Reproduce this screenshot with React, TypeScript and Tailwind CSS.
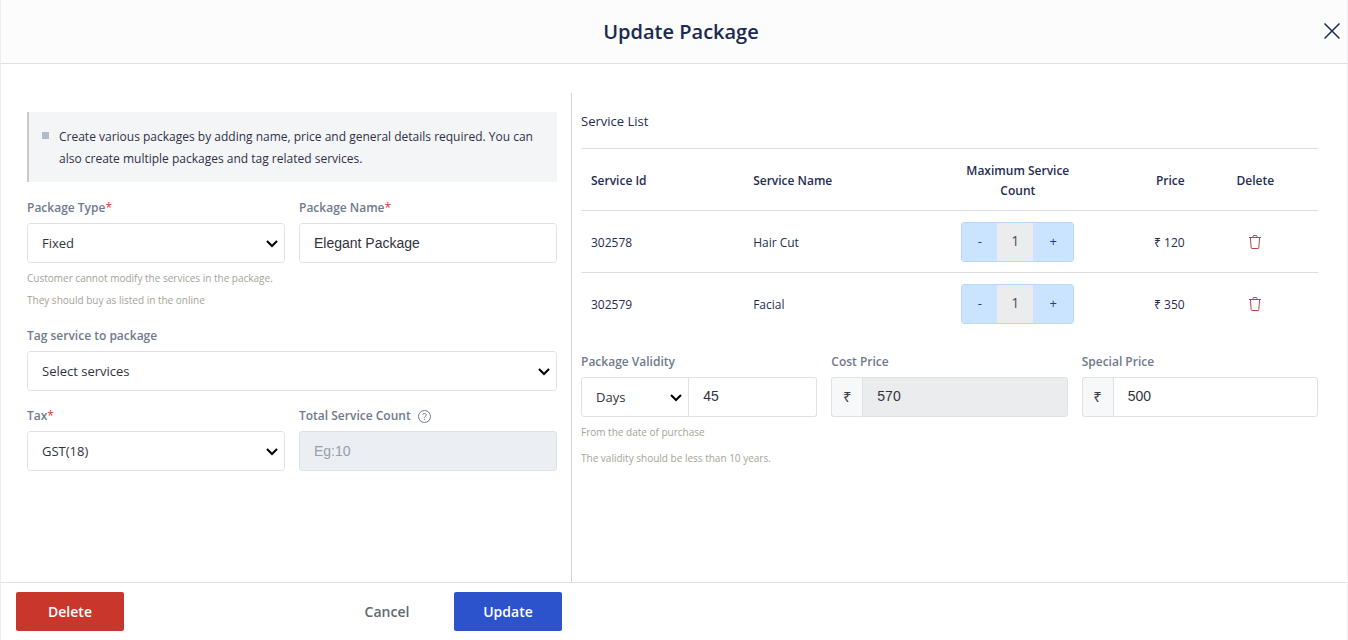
import { useState } from "react"
import type { ReactNode } from "react"

type Service = {
  id: number
  name: string
  count: number
  price: number
}

const initialServices: Service[] = [
  { id: 302578, name: "Hair Cut", count: 1, price: 120 },
  { id: 302579, name: "Facial", count: 1, price: 350 },
]

const controlClass =
  "block h-10 w-full min-w-0 rounded-[3px] border border-[#dee2e6] text-[#33333d] focus:outline-none focus:border-[#2c52cc]"

const inputClass = `${controlClass} px-[14px] font-['Liberation_Sans',sans-serif] text-[14px]`

const hintClass = "mt-1 text-[10px] leading-[22px] text-[#a5a397]"

function FieldLabel({ htmlFor, required, children }: { htmlFor: string; required?: boolean; children: ReactNode }) {
  return (
    <label htmlFor={htmlFor} className="mb-[3px] flex h-6 items-center text-[12px] font-semibold text-[#707a8c]">
      {children}
      {required && <span className="font-normal text-[#d0392c]">*</span>}
    </label>
  )
}

type SelectBoxProps = {
  id: string
  options: string[]
  joined?: boolean
  label?: string
}

function SelectBox({ id, options, joined, label }: SelectBoxProps) {
  return (
    <div className="relative">
      <select
        id={id}
        aria-label={label}
        className={`${controlClass} appearance-none bg-white pl-[14px] pr-8 pt-[2px] text-[13px] ${joined ? "rounded-r-none" : ""}`}
      >
        {options.map((option) => (
          <option key={option}>{option}</option>
        ))}
      </select>
      <svg
        className="pointer-events-none absolute right-[7px] top-4 h-[9px] w-3"
        viewBox="0 0 12 9"
        fill="none"
        stroke="#000"
        strokeWidth={2}
      >
        <path d="M1 2l5 5 5-5" />
      </svg>
    </div>
  )
}

function TrashIcon() {
  return (
    <svg className="h-[14px] w-3" viewBox="0 0 12 14" fill="none" stroke="#b8483c" strokeWidth={1}>
      <path d="M0 2.5h12M4 2V1.2Q4 .5 4.8 .5h2.4Q8 .5 8 1.2V2M1.4 2.5l.8 10.3q.1.7.8.7h6q.7 0 .8-.7l.8-10.3" />
    </svg>
  )
}

function HelpIcon() {
  return (
    <svg className="ml-[7px] h-[13px] w-[13px]" viewBox="0 0 13 13" fill="none" stroke="#707a8c" strokeWidth={1}>
      <circle cx="6.5" cy="6.5" r="6" />
      <path d="M4.7 5.1c0-1.1.8-1.7 1.8-1.7s1.8.6 1.8 1.6c0 1.2-1.8 1.3-1.8 2.7M6.5 8.8v1.1" />
    </svg>
  )
}

function PriceField({ id, label, value, readOnly }: { id: string; label: string; value: string; readOnly?: boolean }) {
  return (
    <div>
      <FieldLabel htmlFor={id}>{label}</FieldLabel>
      <div className="flex">
        <span className="flex h-10 w-[31px] shrink-0 items-center justify-center rounded-l-[3px] border border-r-0 border-[#dee2e6] bg-[#f7f8fa] text-[15px] text-[#3c3f48]">
          ₹
        </span>
        <input
          id={id}
          type="text"
          defaultValue={value}
          readOnly={readOnly}
          className={`${inputClass} rounded-l-none pb-[2px] ${readOnly ? "bg-[#ebecee]" : "bg-white"}`}
        />
      </div>
    </div>
  )
}

export default function App() {
  const [services, setServices] = useState(initialServices)

  const changeCount = (id: number, delta: number) => {
    setServices(services.map((s) => (s.id === id ? { ...s, count: Math.max(1, s.count + delta) } : s)))
  }

  const removeService = (id: number) => {
    setServices(services.filter((s) => s.id !== id))
  }

  return (
    <div className="flex min-h-screen flex-col border-x border-[#ececee] bg-white font-['Open_Sans','Noto_Sans',sans-serif] text-[#1f2d52]">
      <header className="grid h-16 grid-cols-[1fr_auto_1fr] items-center border-b border-[#dfe0e3] bg-[#fcfcfc] pb-[2px] pl-[14px]">
        <h1 className="col-start-2 pt-[2px] text-[20px] font-semibold text-[#1b2a50]">Update Package</h1>
        <button type="button" aria-label="Close" className="mr-[7px] justify-self-end">
          <svg className="h-4 w-4" viewBox="0 0 16 16" fill="none" stroke="#1b2a50" strokeWidth={1.5}>
            <path d="M.5 .5l15 15M15.5 .5l-15 15" />
          </svg>
        </button>
      </header>

      <main className="grid flex-1 grid-cols-[571fr_775fr] pt-[29px]">
        <section className="border-r border-[#d3d5d9] pl-[26px] pr-[14px] pt-[19px]">
          <ul className="mb-[14px] border-l-2 border-[#c9cacd] bg-[#f4f5f7] px-[13px] pb-3 pt-[14px]">
            <li className="flex text-[12px] leading-[22px] text-[#2f3046]">
              <span className="mr-[10px] mt-[6px] h-[7px] w-[7px] shrink-0 bg-[#b3bacb]" />
              <span>
                Create various packages by adding name, price and general details required. You can also create multiple
                packages and tag related services.
              </span>
            </li>
          </ul>

          <div className="grid grid-cols-2 gap-x-[14px]">
            <div>
              <FieldLabel htmlFor="package-type" required>
                Package Type
              </FieldLabel>
              <SelectBox id="package-type" options={["Fixed", "Flexible"]} />
              <p className={hintClass}>
                Customer cannot modify the services in the package.
                <br />
                They should buy as listed in the online
              </p>
            </div>
            <div>
              <FieldLabel htmlFor="package-name" required>
                Package Name
              </FieldLabel>
              <input
                id="package-name"
                type="text"
                defaultValue="Elegant Package"
                className={`${inputClass} bg-white`}
              />
            </div>
            <div className="col-span-2 mt-[13px]">
              <FieldLabel htmlFor="services">Tag service to package</FieldLabel>
              <SelectBox id="services" options={["Select services"]} />
            </div>
            <div className="mt-[13px]">
              <FieldLabel htmlFor="tax" required>
                Tax
              </FieldLabel>
              <SelectBox id="tax" options={["GST(18)"]} />
            </div>
            <div className="mt-[13px]">
              <FieldLabel htmlFor="service-count">
                Total Service Count
                <HelpIcon />
              </FieldLabel>
              <input
                id="service-count"
                type="text"
                placeholder="Eg:10"
                disabled
                className={`${inputClass} bg-[#ebeef3] placeholder:text-[#96a0aa]`}
              />
            </div>
          </div>
        </section>

        <section className="pl-[9px] pr-[29px] pt-[17px]">
          <h2 className="mb-[16px] text-[13px] leading-[22px]">Service List</h2>
          <table className="mb-[15px] w-full table-fixed border-collapse text-[12px]">
            <colgroup>
              <col className="w-[22%]" />
              <col className="w-[20%]" />
              <col className="w-[34%]" />
              <col className="w-[7%]" />
              <col className="w-[17%]" />
            </colgroup>
            <thead>
              <tr className="h-[62px] border-y border-[#dcdee3] leading-5">
                <th className="pl-[10px] pt-[2px] text-left font-semibold">Service Id</th>
                <th className="pl-[10px] pt-[2px] text-left font-semibold">Service Name</th>
                <th className="pl-16 pr-[60px] pt-[2px] text-center font-semibold">Maximum Service Count</th>
                <th className="pr-2 pt-[2px] text-right font-semibold">Price</th>
                <th className="pt-[2px] text-center font-semibold">Delete</th>
              </tr>
            </thead>
            <tbody>
              {services.map((service) => (
                <tr key={service.id} className="h-[62px] border-b border-[#dcdee3] last:border-b-0">
                  <td className="pl-[10px] pt-[2px]">{service.id}</td>
                  <td className="pl-[10px] pt-[2px]">{service.name}</td>
                  <td className="pl-1">
                    <div className="mx-auto flex h-10 w-[113px] overflow-hidden rounded-[3px] border border-[#b9d9fb] text-[13px]">
                      <button
                        type="button"
                        aria-label={`Decrease ${service.name}`}
                        onClick={() => changeCount(service.id, -1)}
                        className="w-[35px] bg-[#cae4ff] text-[#1f3f8a]"
                      >
                        -
                      </button>
                      <span className="flex w-9 items-center justify-center bg-[#ebecee] pb-[2px] text-[14px] text-[#4a4f5c]">
                        {service.count}
                      </span>
                      <button
                        type="button"
                        aria-label={`Increase ${service.name}`}
                        onClick={() => changeCount(service.id, 1)}
                        className="w-10 bg-[#cae4ff] text-[#1f3f8a]"
                      >
                        +
                      </button>
                    </div>
                  </td>
                  <td className="whitespace-nowrap pr-2 pt-[2px] text-right">₹ {service.price}</td>
                  <td>
                    <button
                      type="button"
                      aria-label={`Delete ${service.name}`}
                      onClick={() => removeService(service.id)}
                      className="mx-auto block"
                    >
                      <TrashIcon />
                    </button>
                  </td>
                </tr>
              ))}
            </tbody>
          </table>

          <div className="grid grid-cols-3 gap-x-[14px]">
            <div>
              <FieldLabel htmlFor="validity">Package Validity</FieldLabel>
              <div className="grid grid-cols-[108fr_128fr]">
                <SelectBox id="validity-unit" label="Validity unit" options={["Days", "Months", "Years"]} joined />
                <input
                  id="validity"
                  type="text"
                  defaultValue="45"
                  className={`${inputClass} rounded-l-none border-l-0 bg-white pb-[2px]`}
                />
              </div>
              <p className={hintClass}>From the date of purchase</p>
              <p className={hintClass}>The validity should be less than 10 years.</p>
            </div>
            <PriceField id="cost-price" label="Cost Price" value="570" readOnly />
            <PriceField id="special-price" label="Special Price" value="500" />
          </div>
        </section>
      </main>

      <footer className="grid h-[58px] grid-cols-[571fr_775fr] items-center border-t border-[#dfe0e3] text-[14px] font-semibold">
        <div className="flex items-center gap-[13px] pl-[15px] pr-[10px]">
          <button type="button" className="mr-auto h-[39px] w-[108px] rounded-[2px] bg-[#c9362c] text-white">
            Delete
          </button>
          <button type="button" className="h-[39px] w-[108px] text-[#626773]">
            Cancel
          </button>
          <button type="button" className="h-[39px] w-[108px] rounded-[2px] bg-[#2c52cc] text-white">
            Update
          </button>
        </div>
      </footer>
    </div>
  )
}
